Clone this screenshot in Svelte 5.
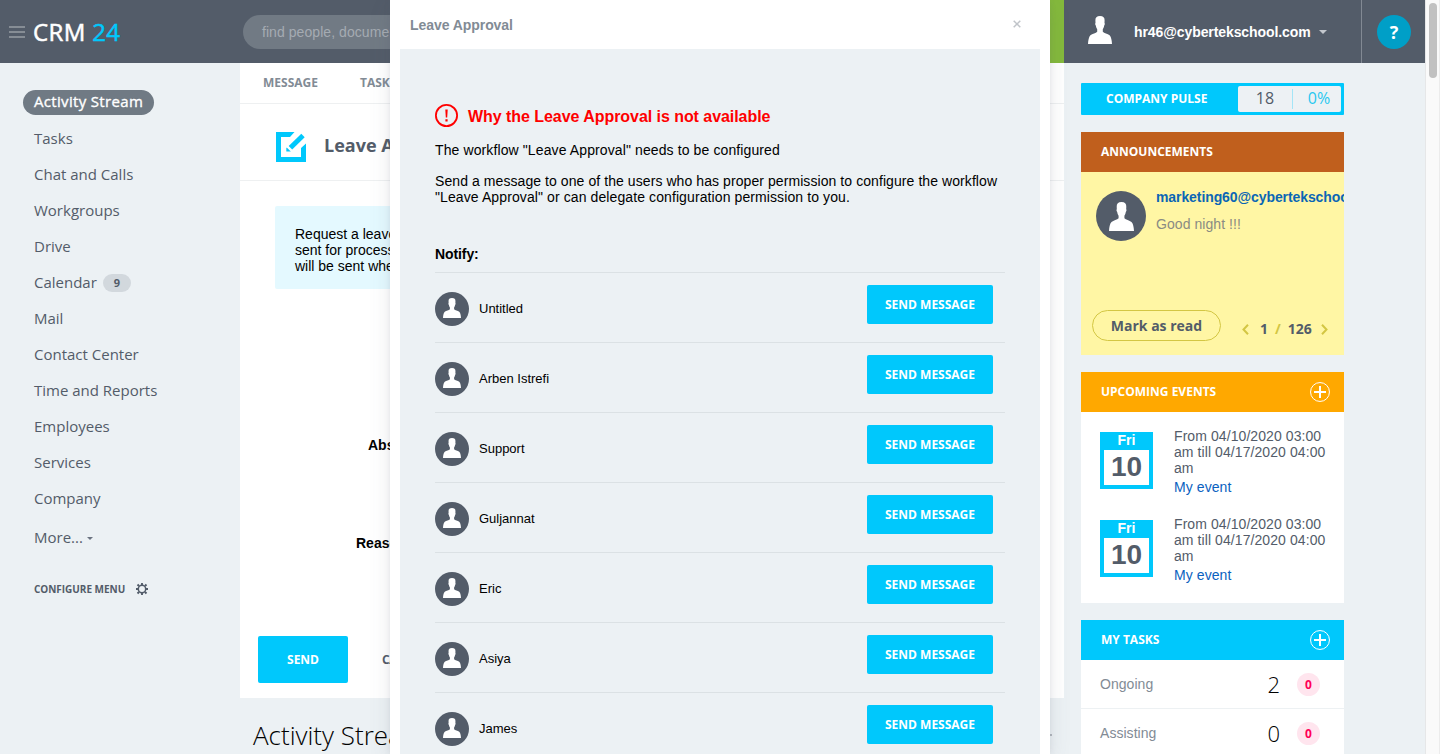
<script>
  const menu = ['Tasks', 'Chat and Calls', 'Workgroups', 'Drive', 'Calendar', 'Mail', 'Contact Center', 'Time and Reports', 'Employees', 'Services', 'Company'];
  const users = ['Untitled', 'Arben Istrefi', 'Support', 'Guljannat', 'Eric', 'Asiya', 'James'];
  const events = [1, 2];
  const tasks = [['Ongoing', '2'], ['Assisting', '0']];
</script>

{#snippet person()}
  <svg class="person" viewBox="0 0 24 28" preserveAspectRatio="none">
    <path fill="#fff" d="M12 0C8.800 0 7.200 1.600 7.400 4.600L7.500 7c-.6.500-.3 2 .4 2.700.2 1.700.8 2.700 1.300 3.500v2.500C8 17.300 4.300 17.600 2.400 19.300.8 20.900.2 24.500 0 28h24c-.2-3.500-.8-7.100-2.400-8.700-1.900-1.700-5.600-2-6.800-3.600v-2.500c.5-.8 1.100-1.800 1.300-3.500.7-.7 1-2.200.4-2.700l.1-2.400C16.800 1.600 15.200 0 12 0z" />
  </svg>
{/snippet}

{#snippet plus()}
  <svg width="20" height="20" viewBox="0 0 20 20" fill="none" stroke="#fff">
    <circle cx="10" cy="10" r="9.450" stroke-width="1" />
    <path d="M4 10h12M10 4v12" stroke-width="2" />
  </svg>
{/snippet}

<div class="page">
  <header>
    <div class="burger"><i></i><i></i><i></i></div>
    <div class="logo">CRM <span>24</span></div>
    <div class="search">find people, documents</div>
    <div class="clock"></div>
    <div class="user">
      <div class="user-pic">{@render person()}</div>
      <span>hr46@cybertekschool.com</span>
      <svg width="8" height="4" viewBox="0 0 8 4"><path d="M0 0h8L4 4z" fill="#c3c7cd" /></svg>
    </div>
    <div class="help"><b>?</b></div>
  </header>

  <div class="body">
    <nav>
      <div class="active">Activity Stream</div>
      {#each menu as m}
        <div class="item">{m}{#if m === 'Calendar'}<em>9</em>{/if}</div>
      {/each}
      <div class="item more">More...<svg width="6" height="3" viewBox="0 0 6 3"><path d="M0 0h6L3 3z" fill="#6b7380" /></svg></div>
      <div class="configure">
        CONFIGURE MENU
        <svg width="12" height="12" viewBox="0 0 12 12" fill="none" stroke="#525c69">
          <circle cx="6" cy="6" r="3.700" stroke-width="1.500" />
          <path stroke-width="1.900" d="M6 0v2M6 10v2M0 6h2M10 6h2M1.500 1.500l1.500 1.500M9 9l1.500 1.500M1.500 10.500L3 9M9 3l1.500-1.500" />
        </svg>
      </div>
    </nav>

    <main>
      <section class="form">
        <div class="tabs"><span>MESSAGE</span><span>TASK</span></div>
        <div class="form-title">
          <svg width="30" height="30" viewBox="0 0 30 30">
            <path fill="#00c8fc" d="M0 0h18.500L14 5H5v20h20V16l5-4.500V30H0z" />
            <path fill="#00c8fc" d="M25.300 1.700l3.400 3.600L16.200 17.600l-3.500-3.500z" />
            <path fill="#00c8fc" d="M11 15.700l3.800 3.800h-4.500v-3.800z" />
          </svg>
          <h2>Leave Approval</h2>
        </div>
        <div class="info">Request a leave<br />sent for processing<br />will be sent when</div>
        <div class="label absence">Absence type:</div>
        <div class="label reason">Reason:</div>
        <div class="actions"><button>SEND</button><span>CANCEL</span></div>
      </section>
      <div class="stream"><h1>Activity Stream</h1><i></i></div>
    </main>

    <aside>
      <div class="pulse"><b>COMPANY PULSE</b><div class="pulse-box"><span>18</span><i></i><span class="pct">0%</span></div></div>

      <section class="widget announcements">
        <div class="head">ANNOUNCEMENTS</div>
        <div class="note">
          <div class="note-top">
            <div class="avatar large">{@render person()}</div>
            <div class="note-text"><b>marketing60@cybertekschool.com</b><p>Good night !!!</p></div>
          </div>
          <div class="note-foot">
            <button>Mark as read</button>
            <div class="pager">
              <svg width="7" height="11" viewBox="0 0 7 11"><path d="M6 .8L1.500 5.500 6 10.200" /></svg>
              <b>1</b><strong>/</strong><b>126</b>
              <svg width="7" height="11" viewBox="0 0 7 11"><path d="M1 .8l4.500 4.700L1 10.200" /></svg>
            </div>
          </div>
        </div>
      </section>

      <section class="widget events">
        <div class="head">UPCOMING EVENTS {@render plus()}</div>
        {#each events as e}
          <div class="event">
            <div class="date"><b>Fri</b><strong>10</strong></div>
            <div class="event-text">From 04/10/2020 03:00<br />am till 04/17/2020 04:00<br />am<a>My event</a></div>
          </div>
        {/each}
      </section>

      <section class="widget tasks">
        <div class="head">MY TASKS {@render plus()}</div>
        {#each tasks as t}
          <div class="task"><span>{t[0]}</span><strong>{t[1]}</strong><em>0</em></div>
        {/each}
      </section>
    </aside>
  </div>

  <div class="scrollbar"><i></i></div>

  <div class="modal">
    <div class="modal-head">
      <b>Leave Approval</b>
      <svg width="8" height="8" viewBox="0 0 8 8"><path d="M.7.7l6.600 6.600M7.300.7L.7 7.300" stroke="#c0c4c9" stroke-width="1.500" /></svg>
    </div>
    <div class="modal-body">
      <div class="warning">
        <svg width="23" height="23" viewBox="0 0 23 23">
          <circle cx="11.500" cy="11.500" r="10.600" fill="none" stroke="#f00" stroke-width="1.800" />
          <path fill="#f00" d="M10.300 5.500h2.400l-.5 8h-1.400zM10.400 15.200h2.200v2.300h-2.200z" />
        </svg>
        <b>Why the Leave Approval is not available</b>
      </div>
      <p class="first">The workflow "Leave Approval" needs to be configured</p>
      <p class="second">Send a message to one of the users who has proper permission to configure the workflow<br /><span>"Leave Approval" or can delegate configuration permission to you.</span></p>
      <div class="notify">Notify:</div>
      {#each users as u}
        <div class="row">
          <div class="avatar">{@render person()}</div>
          <span>{u}</span>
          <button>SEND MESSAGE</button>
        </div>
      {/each}
    </div>
  </div>
</div>

<style>
  :global(body) { margin: 0; overflow: hidden; }
  .page, .page * { box-sizing: border-box; }
  .page { position: relative; width: 1440px; height: 754px; overflow: hidden; background: #ecf1f4; font: 14px/16px "Liberation Sans", Arial, sans-serif; color: #000; }
  h1, h2, p { margin: 0; }
  b, strong { font-weight: 700; }
  button { border: 0; padding: 0; font-family: "Open Sans", sans-serif; font-weight: 700; }
  svg { display: block; flex: none; }

  header { width: 1425px; height: 63px; background: #535c69; display: flex; align-items: center; }
  .burger { width: 16px; margin-left: 9px; display: grid; gap: 3px; }
  .burger i { height: 2px; background: #868d95; }
  .logo { width: 218px; padding-left: 8px; font: 400 24px/34px "Open Sans", sans-serif; color: #fff; letter-spacing: .35px; -webkit-text-stroke: .5px currentColor; white-space: nowrap; }
  .logo span { color: #00c8fc; }
  .search { width: 420px; height: 34px; border-radius: 17px; background: #717a84; color: #a5abb2; line-height: 34px; padding-left: 19px; letter-spacing: .06px; white-space: nowrap; overflow: hidden; }
  .clock { margin-left: 237px; width: 164px; height: 63px; background: #84b93c; }
  .user { flex: 1; display: flex; align-items: center; color: #fff; font-weight: 700; padding-left: 24px; }
  .user-pic { width: 24px; height: 28px; margin: -4px 22px 0 0; }
  .user-pic .person { width: 24px; height: 28px; }
  .user svg:last-child { margin-left: 8px; }
  .user .user-pic svg { margin: 0; }
  .user span { letter-spacing: -.09px; padding-top: 1px; }
  .help { width: 64px; height: 63px; border-left: 1px solid #828993; display: flex; align-items: center; padding-left: 15px; }
  .help b { width: 34px; height: 34px; border-radius: 50%; background: #009fc7; color: #fff; font: 700 18px/34px "Open Sans", sans-serif; text-align: center; }

  .body { width: 1425px; height: 691px; display: grid; grid-template-columns: 240px 824px 263px; column-gap: 0; }
  nav { padding: 27px 0 0 34px; font: 15px/36px "Open Sans", sans-serif; color: #535c69; }
  .active { width: 131px; height: 25px; margin: 0 0 5px -11px; padding-left: 11px; border-radius: 13px; background: #707a84; color: #fff; -webkit-text-stroke: .35px #fff; line-height: 23px; letter-spacing: .33px; white-space: nowrap; }
  .item { height: 36px; display: flex; align-items: center; white-space: nowrap; }
  .item em { margin: 1px 0 0 6px; width: 28px; height: 18px; border-radius: 9px; background: #d2d8dd; font: 700 11px/18px "Open Sans", sans-serif; text-align: center; }
  .more { margin-top: 3px; }
  .more svg { margin: 3px 0 0 4px; }
  .configure { display: flex; align-items: center; height: 20px; margin-top: 24px; font-size: 10px; font-weight: 700; letter-spacing: -.03px; gap: 11px; }

  .form { height: 635px; background: #fff; overflow: hidden; }
  .tabs { height: 41px; border-bottom: 1px solid #eef0f1; padding-left: 23px; display: flex; gap: 42px; font: 700 12px/40px "Open Sans", sans-serif; color: #828b95; }
  .form-title { height: 77px; border-bottom: 1px solid #eef0f1; display: flex; align-items: center; padding: 9px 0 0 36px; gap: 18px; }
  h2 { font: 700 18px/24px "Open Sans", sans-serif; color: #535c69; margin-top: -4px; }
  .info { margin: 25px 36px 0 35px; height: 83px; border-radius: 2px; background: #e4f9ff; padding: 20px; }
  .label { font-weight: 700; }
  .absence { margin: 148px 0 0 128px; }
  .reason { margin: 82px 0 0 116px; }
  .actions { margin: 85px 0 0 18px; height: 47px; display: flex; align-items: center; gap: 34px; font: 700 12px/16px "Open Sans", sans-serif; color: #535c69; }
  .actions button { width: 90px; height: 47px; border-radius: 2px; background: #00c8fc; color: #fff; font-size: 12px; }
  .actions span { letter-spacing: -.3px; }
  .stream { display: flex; justify-content: space-between; align-items: center; padding: 19px 12px 0 13px; }
  h1 { font: 300 26px/36px "Open Sans", sans-serif; white-space: nowrap; }
  .stream i { width: 3px; height: 2px; background: #b3b8be; }

  aside { margin-left: 17px; padding-top: 20px; width: 263px; }
  .pulse { height: 32px; border-radius: 1px; background: #00c8fc; display: flex; align-items: center; justify-content: space-between; padding: 0 3px 0 25px; font: 700 12px/16px "Open Sans", sans-serif; color: #fff; }
  .pulse-box { width: 103px; height: 26px; border-radius: 2px; background: #edf1f4; display: flex; align-items: center; font-size: 16px; font-weight: 400; color: #535c69; }
  .pulse-box span { width: 54px; text-align: center; margin-top: -2px; }
  .pulse-box i { width: 1px; height: 20px; background: #a4e5f7; }
  .pulse-box .pct { flex: 1; color: #28c8f0; padding-left: 4px; }
  .widget { margin-top: 17px; background: #fff; overflow: hidden; }
  .head { height: 40px; display: flex; align-items: center; justify-content: space-between; padding: 0 14px 0 20px; color: #fff; font: 700 12px/16px "Open Sans", sans-serif; background: #c05f1d; }
  .note { height: 183px; background: #fff6a4; padding: 19px 0 0 11px; }
  .note-top { display: flex; gap: 10px; padding-left: 4px; height: 119px; }
  .avatar { width: 34px; height: 34px; border-radius: 50%; background: #535c69; flex: none; display: flex; justify-content: center; padding-top: 6px; }
  .avatar .person { width: 18px; height: 20px; }
  .avatar.large { width: 50px; height: 50px; padding-top: 11px; }
  .avatar.large .person { width: 25px; height: 29px; }
  .note-text { overflow: hidden; }
  .note-text b { display: block; color: #0b66b5; white-space: nowrap; margin-top: -2px; letter-spacing: -.09px; }
  .note-text p { color: #8a8b83; margin-top: 11px; letter-spacing: .06px; }
  .note-foot { display: flex; align-items: center; }
  .note-foot button { width: 129px; height: 31px; border: 1px solid #d3c643; border-radius: 16px; background: none; color: #535c69; font-size: 14px; }
  .pager { display: flex; align-items: center; margin: 8px 0 0 21px; font: 700 14px/16px "Open Sans", sans-serif; color: #535c69; }
  .pager path { fill: none; stroke: #d3c643; stroke-width: 2; }
  .pager b, .pager strong { margin-top: -2px; }
  .pager b:first-of-type { margin-left: 11px; }
  .pager strong { margin-left: 7px; margin-right: 7px; color: #d3c643; }
  .pager b:last-of-type { margin-right: 9px; }
  .events { height: 231px; }
  .events .head { background: #ffa800; }
  .event { height: 88px; display: flex; gap: 21px; padding: 16px 0 0 19px; }
  .date { width: 53px; height: 57px; margin-top: 4px; background: #00c8fc; padding: 0 4px 4px; text-align: center; }
  .date b { display: block; height: 18px; color: #fff; line-height: 17px; }
  .date strong { display: block; height: 35px; background: #fff; color: #535c69; font-size: 28px; line-height: 34px; }
  .event-text { color: #535c69; white-space: nowrap; letter-spacing: .08px; }
  .event-text a { display: block; margin-top: 3px; color: #0b61c0; }
  .tasks .head { background: #00c8fc; }
  .task { height: 49px; border-bottom: 1px solid #edf1f3; display: flex; align-items: center; padding: 0 24px 0 19px; color: #828b95; letter-spacing: .04px; }
  .task strong { margin-left: auto; color: #000; font: 300 22px/30px "Open Sans", sans-serif; }
  .task em { width: 23px; height: 23px; margin-left: 17px; border-radius: 50%; background: #ffe5ee; color: #ff0057; font: 700 12px/23px "Open Sans", sans-serif; text-align: center; }

  .scrollbar { position: absolute; right: 0; top: 0; width: 15px; height: 754px; background: #fafafa; border-left: 1px solid #e6e7e8; border-right: 1px solid #ececec; padding: 3px 2px 0 3px; }
  .scrollbar i { display: block; width: 8px; height: 75px; border-radius: 4px; background: #c1c1c1; }

  .modal { position: absolute; left: 390px; top: 0; width: 660px; height: 754px; background: #fff; padding: 0 10px; box-shadow: 0 7px 21px rgba(83, 92, 105, .12), 0 0 6px rgba(83, 92, 105, .1); }
  .modal-head { height: 49px; display: flex; align-items: center; justify-content: space-between; padding: 1px 19px 0 10px; color: #828b95; letter-spacing: -.06px; }
  .modal-head svg { margin-top: -3px; }
  .modal-body { height: 705px; overflow: hidden; background: #ecf1f4; padding: 55px 35px 0; }
  .warning { display: flex; align-items: center; gap: 10px; height: 23px; color: #f00; font-size: 16px; letter-spacing: -.05px; }
  .warning b { padding-top: 2px; }
  .first { margin-top: 15px; letter-spacing: .11px; }
  .second { margin-top: 15px; white-space: nowrap; letter-spacing: .075px; }
  .second span { letter-spacing: .1px; }
  .notify { font-weight: 700; margin-top: 41px; height: 26px; letter-spacing: -.1px; }
  .row { height: 70px; border-top: 1px solid #dbe1e4; display: flex; align-items: center; padding: 2px 12px 0 0; font-size: 13px; }
  .row > span { margin-left: 10px; }
  .row button { width: 126px; height: 39px; margin: -8px 0 0 auto; border-radius: 2px; background: #00c8fc; color: #fff; font-size: 12px; }
</style>
